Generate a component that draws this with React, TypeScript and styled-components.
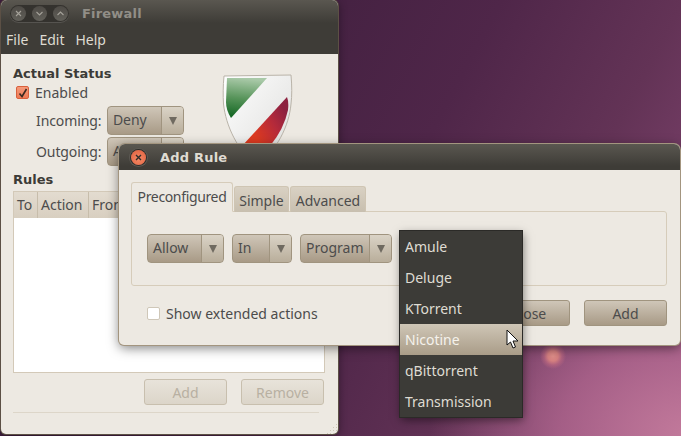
import * as React from 'react';
import styled, { createGlobalStyle } from 'styled-components';

const GlobalStyle = createGlobalStyle`
  html, body { margin: 0; padding: 0; }
  body { font-family: "Noto Sans", "DejaVu Sans", sans-serif; color: #4c4c4c; }
`;

const Desktop = styled.div`
  position: relative;
  width: 681px;
  height: 436px;
  overflow: hidden;
  background:
    radial-gradient(circle at 553px 356px, #e08f8a 0, #d58080 5px, rgba(200,110,130,.5) 9px, rgba(170,90,130,0) 13px),
    radial-gradient(ellipse 260px 190px at 690px 436px, #c27a9b 0, rgba(180,105,145,.75) 50%, rgba(160,90,130,0) 100%),
    linear-gradient(118deg, #3f1f3e 25%, #4f2649 55%, #633356 75%, #8a4a78 100%);
`;

const Window = styled.div<{ $x: number; $y: number; $w: number; $h: number }>`
  position: absolute;
  left: ${p => p.$x}px;
  top: ${p => p.$y}px;
  width: ${p => p.$w}px;
  height: ${p => p.$h}px;
  display: flex;
  flex-direction: column;
  border-radius: 6px 6px 5px 5px;
  overflow: hidden;
  background: #ede9e2;
  box-shadow: 0 0 0 1px #5c5045, 0 2px 10px rgba(0,0,0,.45);
`;

const Dialog = styled(Window)`
  box-shadow: 0 0 0 1px #a3957f, 0 3px 12px rgba(0,0,0,.5);
`;

const TitleBar = styled.div<{ $h: number; $gap: number; $pad: number }>`
  height: ${p => p.$h}px;
  flex: none;
  display: flex;
  align-items: center;
  gap: ${p => p.$gap}px;
  padding-left: ${p => p.$pad}px;
  background: linear-gradient(#5a5750, #3e3c37 85%);
`;

const Title = styled.span<{ $active?: boolean }>`
  font-family: "DejaVu Sans", sans-serif;
  font-weight: 700;
  font-size: 13px;
  letter-spacing: .2px;
  color: ${p => (p.$active ? '#dfdbd2' : '#918e87')};
`;

const ButtonPill = styled.div`
  display: flex;
  align-items: center;
  justify-content: space-between;
  width: 59px;
  height: 17px;
  padding: 0 1px;
  box-sizing: border-box;
  border-radius: 9px;
  background: #34322e;
  box-shadow: 0 1px 0 rgba(255,255,255,.12);
`;

const WinButton = styled.div`
  width: 15px;
  height: 15px;
  border-radius: 50%;
  display: flex;
  align-items: center;
  justify-content: center;
  background: linear-gradient(#4d4a45, #62605a);
  svg { display: block; }
`;

const CloseBtn = styled.div`
  width: 15px;
  height: 15px;
  border-radius: 50%;
  display: flex;
  align-items: center;
  justify-content: center;
  background: radial-gradient(circle at 50% 60%, #f58a66, #dd5c3b);
  box-shadow: 0 0 0 1px #2e2c29, 0 0 0 2px #5d5a54;
`;

const MenuBar = styled.div`
  height: 27px;
  flex: none;
  display: flex;
  align-items: center;
  gap: 11px;
  padding: 0 0 2px 5px;
  box-sizing: border-box;
  background: #3e3c37;
  color: #dfdbd2;
  font-size: 14px;
`;

const FirewallBody = styled.div`
  flex: 1;
  display: flex;
  flex-direction: column;
  padding: 11px 12px 0 12px;
`;

const StatusRow = styled.div`
  display: flex;
  height: 106px;
  flex: none;
`;

const StatusCol = styled.div`
  width: 208px;
  flex: none;
  display: flex;
  flex-direction: column;
`;

const Heading = styled.div`
  font-family: "DejaVu Sans", sans-serif;
  font-weight: 700;
  font-size: 13px;
  line-height: 18px;
  color: #3c3b37;
`;

const CheckRow = styled.div<{ $pad: number; $gap: number }>`
  display: flex;
  align-items: center;
  gap: ${p => p.$gap}px;
  padding-left: ${p => p.$pad}px;
  font-size: 14px;
`;

const CheckBox = styled.span<{ $on?: boolean }>`
  width: 13px;
  height: 13px;
  flex: none;
  box-sizing: border-box;
  display: flex;
  align-items: center;
  justify-content: center;
  border-radius: 2px;
  border: 1px solid ${p => (p.$on ? '#d9603c' : '#cfc7b8')};
  background: ${p => (p.$on ? 'linear-gradient(#f49a7a, #ee7a55)' : '#fff')};
`;

const FieldRow = styled.div<{ $mt: number }>`
  display: flex;
  align-items: center;
  gap: 6px;
  padding-left: 23px;
  height: 29px;
  margin-top: ${p => p.$mt}px;
  font-size: 14px;
  letter-spacing: -.1px;
`;

const FieldLabel = styled.span`
  width: 65px;
  flex: none;
`;

const Combo = styled.div<{ $w: number }>`
  width: ${p => p.$w}px;
  height: 29px;
  flex: none;
  box-sizing: border-box;
  display: flex;
  border: 1px solid #a0947f;
  border-radius: 4px;
  background: linear-gradient(#cfc6b8, #a89a86);
  font-size: 14px;
  color: #4c4c4c;
  overflow: hidden;
`;

const ComboText = styled.span`
  flex: 1;
  padding-left: 5px;
  line-height: 26px;
`;

const ComboArrow = styled.span`
  width: 21px;
  flex: none;
  display: flex;
  align-items: center;
  justify-content: center;
  border-left: 1px solid #a0947f;
  background: linear-gradient(#dad3c6, #b9ae9b);
  &::after {
    content: '';
    border-left: 4.5px solid transparent;
    border-right: 4.5px solid transparent;
    border-top: 8px solid #6f6a60;
  }
`;

const ShieldWrap = styled.div`
  padding: 9px 0 0 0;
  svg { display: block; }
`;

const RulesTable = styled.div`
  width: 312px;
  height: 182px;
  flex: none;
  margin-top: 2px;
  box-sizing: border-box;
  border: 1px solid #d3c9b8;
  background: #fff;
`;

const TableHead = styled.div`
  height: 26px;
  display: flex;
  background: linear-gradient(#e3dcd0, #d8cfc0);
  font-size: 14px;
`;

const HeadCell = styled.div<{ $w: number }>`
  width: ${p => p.$w}px;
  flex: none;
  box-sizing: border-box;
  padding-left: 3px;
  line-height: 25px;
  border-right: 1px solid #c7bdab;
`;

const ButtonRow = styled.div`
  display: flex;
  justify-content: flex-end;
  gap: 14px;
  margin-top: 6px;
  padding-right: 2px;
`;

const PushButton = styled.div<{ $disabled?: boolean }>`
  width: 83px;
  height: 26px;
  box-sizing: border-box;
  display: flex;
  align-items: center;
  justify-content: center;
  border-radius: 3px;
  font-size: 14px;
  border: 1px solid ${p => (p.$disabled ? '#c8bfae' : '#a0947f')};
  background: ${p => (p.$disabled ? 'linear-gradient(#e8e3da, #dcd5c9)' : 'linear-gradient(#cfc6b8, #a89a86)')};
  color: ${p => (p.$disabled ? '#b8b0a2' : '#4c4c4c')};
`;

const Separator = styled.div`
  height: 1px;
  width: 306px;
  margin-top: 7px;
  background: #ddd6c9;
`;

const ResizeGrip = styled.div`
  align-self: flex-end;
  width: 11px;
  height: 11px;
  margin: 10px -11px 0 0;
  background-image: radial-gradient(circle, #cfc7b8 0.8px, transparent 1px);
  background-size: 3px 3px;
  clip-path: polygon(100% 0, 100% 100%, 0 100%);
`;

const DialogBody = styled.div`
  flex: 1;
  display: flex;
  flex-direction: column;
  padding: 12px 13px 0 12px;
`;

const Tabs = styled.div`
  display: flex;
  align-items: flex-end;
  gap: 1px;
  height: 30px;
  margin-bottom: -1px;
  position: relative;
  z-index: 1;
`;

const Tab = styled.div<{ $active?: boolean; $w: number }>`
  width: ${p => p.$w}px;
  height: ${p => (p.$active ? 30 : 26)}px;
  box-sizing: border-box;
  text-align: center;
  font-size: 14px;
  line-height: 27px;
  letter-spacing: ${p => (p.$active ? '-.35px' : '0')};
  border-radius: 3px 3px 0 0;
  border: 1px solid ${p => (p.$active ? '#d6ccba' : '#cfc5b3')};
  ${p => (p.$active ? 'border-bottom-color: #ede9e2;' : 'border-bottom: none;')}
  background: ${p => (p.$active ? '#ede9e2' : 'linear-gradient(#d9d1c3, #c8bfaf)')};
`;

const TabPanel = styled.div`
  height: 75px;
  flex: none;
  box-sizing: border-box;
  border: 1px solid #d6ccba;
  border-radius: 0 3px 3px 3px;
  display: flex;
  gap: 8px;
  padding: 22px 0 0 15px;
`;

const DialogFooter = styled.div`
  display: flex;
  align-items: center;
  justify-content: space-between;
  padding-left: 16px;
  margin-top: 14px;
`;

const FooterButtons = styled.div`
  display: flex;
  gap: 14px;
`;

const PopupMenu = styled.div`
  position: absolute;
  left: 400px;
  top: 231px;
  width: 122px;
  background: #3c3b37;
  color: #dfdbd2;
  font-size: 14px;
  box-shadow: 0 0 0 1px #2b2a27, 1px 3px 9px rgba(0,0,0,.5);
`;

const PopupItem = styled.div<{ $active?: boolean }>`
  height: 31px;
  line-height: 31px;
  padding-left: 5px;
  background: ${p => (p.$active ? 'linear-gradient(#cfc6b6, #a99c88)' : 'none')};
  color: ${p => (p.$active ? '#f5f2ec' : '#dfdbd2')};
`;

const Cursor = styled.svg`
  position: absolute;
  left: 506px;
  top: 329px;
`;

const GlyphX = () => (
  <svg width="9" height="9" viewBox="0 0 9 9" fill="none" stroke="#2f2d2a" strokeWidth="1.4">
    <path d="M2 2l5 5M7 2l-5 5" />
  </svg>
);

const Glyph = ({ d }: { d: string }) => (
  <svg width="11" height="11" viewBox="0 0 11 11" fill="none" stroke="#a5a29a" strokeWidth="1.1">
    <path d={d} />
  </svg>
);

const Shield = () => (
  <svg width="74" height="96" viewBox="0 0 74 96">
    <defs>
      <linearGradient id="green" x1="0.3" y1="0" x2="0.2" y2="1">
        <stop offset="0" stopColor="#a9c9a8" />
        <stop offset="0.5" stopColor="#57945a" />
        <stop offset="1" stopColor="#0f6420" />
      </linearGradient>
      <linearGradient id="red" x1="0" y1="1" x2="1" y2="0.4">
        <stop offset="0.3" stopColor="#dd3a20" />
        <stop offset="0.7" stopColor="#b52a3a" />
        <stop offset="1" stopColor="#8d2140" />
      </linearGradient>
      <linearGradient id="white" x1="0" y1="0" x2="1" y2="1">
        <stop offset="0" stopColor="#ffffff" />
        <stop offset="1" stopColor="#dcdcda" />
      </linearGradient>
    </defs>
    <path d="M3 2 L70 1 C71 12 71 22 70 30 C68 52 56 76 36 92 C16 76 5 52 2.5 30 C2 22 2 12 3 2 Z" fill="url(#white)" stroke="#b9b3a8" strokeWidth="1" />
    <path d="M6 4 L46 4 L10 44 Q5 36 5 28 Z" fill="url(#green)" />
    <path d="M66 23 Q68 28 67 36 Q63 55 49 72 L21 72 Z" fill="url(#red)" />
  </svg>
);

const PROGRAMS = ['Amule', 'Deluge', 'KTorrent', 'Nicotine', 'qBittorrent', 'Transmission'];

export default function App() {
  return (
    <Desktop>
      <GlobalStyle />

      <Window $x={1} $y={0} $w={337} $h={434}>
        <TitleBar $h={27} $gap={13} $pad={9}>
          <ButtonPill>
            <WinButton><Glyph d="M3 3l5 5M8 3l-5 5" /></WinButton>
            <WinButton><Glyph d="M2.5 4l3 3 3-3" /></WinButton>
            <WinButton><Glyph d="M2.5 7l3-3 3 3" /></WinButton>
          </ButtonPill>
          <Title>Firewall</Title>
        </TitleBar>
        <MenuBar>
          <span>File</span>
          <span>Edit</span>
          <span>Help</span>
        </MenuBar>
        <FirewallBody>
          <StatusRow>
            <StatusCol>
              <Heading>Actual Status</Heading>
              <CheckRow $pad={3} $gap={6}>
                <CheckBox $on>
                  <svg width="10" height="10" viewBox="0 0 10 10" fill="none" stroke="#3a2a22" strokeWidth="1.6">
                    <path d="M1.5 5.5L4 8.5L8.5 1" />
                  </svg>
                </CheckBox>
                Enabled
              </CheckRow>
              <FieldRow $mt={4}>
                <FieldLabel>Incoming:</FieldLabel>
                <Combo $w={77}><ComboText>Deny</ComboText><ComboArrow /></Combo>
              </FieldRow>
              <FieldRow $mt={2}>
                <FieldLabel>Outgoing:</FieldLabel>
                <Combo $w={77}><ComboText>Allow</ComboText><ComboArrow /></Combo>
              </FieldRow>
            </StatusCol>
            <ShieldWrap><Shield /></ShieldWrap>
          </StatusRow>
          <Heading>Rules</Heading>
          <RulesTable>
            <TableHead>
              <HeadCell $w={24}>To</HeadCell>
              <HeadCell $w={51}>Action</HeadCell>
              <HeadCell $w={60}>From</HeadCell>
            </TableHead>
          </RulesTable>
          <ButtonRow>
            <PushButton $disabled>Add</PushButton>
            <PushButton $disabled>Remove</PushButton>
          </ButtonRow>
          <Separator />
          <ResizeGrip />
        </FirewallBody>
      </Window>

      <Dialog $x={119} $y={144} $w={561} $h={201}>
        <TitleBar $h={26} $gap={14} $pad={12}>
          <CloseBtn><GlyphX /></CloseBtn>
          <Title $active>Add Rule</Title>
        </TitleBar>
        <DialogBody>
          <Tabs>
            <Tab $active $w={102}>Preconfigured</Tab>
            <Tab $w={55}>Simple</Tab>
            <Tab $w={76}>Advanced</Tab>
          </Tabs>
          <TabPanel>
            <Combo $w={77}><ComboText>Allow</ComboText><ComboArrow /></Combo>
            <Combo $w={60}><ComboText>In</ComboText><ComboArrow /></Combo>
            <Combo $w={92}><ComboText>Program</ComboText><ComboArrow /></Combo>
          </TabPanel>
          <DialogFooter>
            <CheckRow $pad={0} $gap={6}>
              <CheckBox />
              Show extended actions
            </CheckRow>
            <FooterButtons>
              <PushButton>Close</PushButton>
              <PushButton>Add</PushButton>
            </FooterButtons>
          </DialogFooter>
        </DialogBody>
      </Dialog>

      <PopupMenu>
        {PROGRAMS.map(name => (
          <PopupItem key={name} $active={name === 'Nicotine'}>{name}</PopupItem>
        ))}
      </PopupMenu>

      <Cursor width="14" height="21" viewBox="0 0 14 21">
        <path d="M1 1 L1 16 L4.5 13 L7 19 L9.5 18 L7 12 L12 12 Z" fill="#fff" stroke="#111" strokeWidth="1" />
      </Cursor>
    </Desktop>
  );
}
